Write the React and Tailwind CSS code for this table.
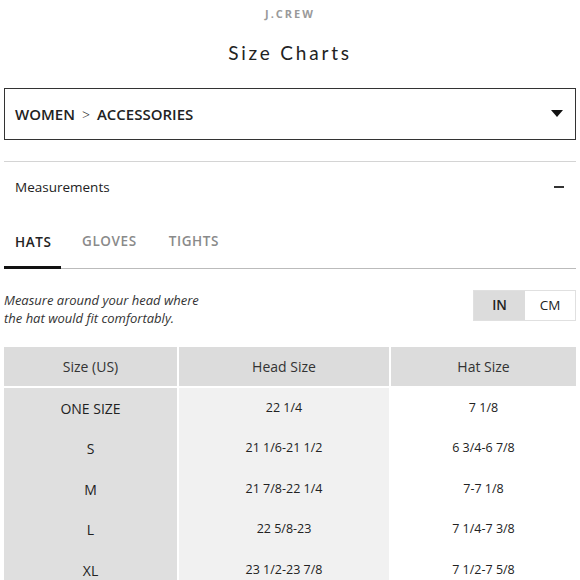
import React from "react";

const rows = [
  ["ONE SIZE", "22 1/4", "7 1/8"],
  ["S", "21 1/6-21 1/2", "6 3/4-6 7/8"],
  ["M", "21 7/8-22 1/4", "7-7 1/8"],
  ["L", "22 5/8-23", "7 1/4-7 3/8"],
  ["XL", "23 1/2-23 7/8", "7 1/2-7 5/8"],
];

export default function App() {
  return (
    <div className="w-[580px] h-[580px] overflow-hidden bg-white text-[#222] font-['Open_Sans',sans-serif]">
      <div className="flex flex-col items-center">
        <div className="mt-[7px] h-[12px] flex items-center text-[11px] font-bold tracking-[2px] text-[#9a9a9a] leading-none">
          J.CREW
        </div>
        <div className="mt-[23px] h-[20px] flex items-center font-['Lato',sans-serif] text-[19px] tracking-[2.8px] leading-none text-[#222]">
          Size Charts
        </div>
      </div>

      <div className="mx-[4px] mt-[26px] h-[52px] border-[1.5px] border-[#333] flex items-center justify-between pl-[10px] pr-[12px]">
        <div className="text-[15px] font-semibold text-[#222] flex items-center">
          <span>WOMEN</span>
          <span className="mx-[7px] font-light text-[14px]">&gt;</span>
          <span>ACCESSORIES</span>
        </div>
        <svg width="12" height="8" viewBox="0 0 12 8">
          <path d="M0 0 L12 0 L6 7 Z" fill="#111" />
        </svg>
      </div>

      <div className="mx-[4px] mt-[21px] border-t border-[#d4d4d4]" />

      <div className="mx-[4px] h-[50px] flex items-center justify-between pl-[11px] pr-[12px]">
        <div className="text-[13.5px] text-[#222]">Measurements</div>
        <div className="w-[10px] h-[2px] bg-[#333]" />
      </div>

      <div className="mx-[4px] mt-[6px] flex border-b border-[#bbb] h-[51px] items-stretch">
        <div className="w-[57px] flex flex-col">
          <div className="flex-1 flex items-center pl-[11px] text-[13.5px] font-semibold tracking-[0.6px] text-[#222]">
            HATS
          </div>
          <div className="h-[3px] bg-[#111] -mb-[1px]" />
        </div>
        <div className="flex items-center pl-[21px] text-[13.5px] font-semibold tracking-[0.6px] text-[#8a8a8a] pb-[3px]">
          GLOVES
        </div>
        <div className="flex items-center pl-[32px] text-[13.5px] font-semibold tracking-[0.6px] text-[#8a8a8a] pb-[3px]">
          TIGHTS
        </div>
      </div>

      <div className="mx-[4px] mt-[21px] flex justify-between items-start">
        <div className="italic text-[13px] leading-[18px] text-[#333] pt-[1px]">
          <div>Measure around your head where</div>
          <div>the hat would fit comfortably.</div>
        </div>
        <div className="flex h-[31px] border border-[#e0e0e0]">
          <div className="w-[51px] bg-[#dcdcdc] flex items-center justify-center text-[13.5px] font-semibold text-[#222]">
            IN
          </div>
          <div className="w-[50px] bg-white flex items-center justify-center text-[13.5px] text-[#222]">
            CM
          </div>
        </div>
      </div>

      <div className="mx-[4px] mt-[20px]">
        <div className="grid grid-cols-[173px_210px_1fr] gap-x-[2px] h-[39px] bg-white">
          <div className="bg-[#dcdcdc] flex items-center justify-center text-[14px] text-[#333]">Size (US)</div>
          <div className="bg-[#dcdcdc] flex items-center justify-center text-[14px] text-[#333]">Head Size</div>
          <div className="bg-[#dcdcdc] flex items-center justify-center text-[14px] text-[#333]">Hat Size</div>
        </div>
        <div className="grid grid-cols-[173px_210px_1fr] gap-x-[2px] mt-[2px]">
          <div className="bg-[#dfdfdf] flex flex-col">
            {rows.map((r) => (
              <div key={r[0]} className="h-[40.5px] flex items-center justify-center text-[14px] text-[#222]">
                {r[0]}
              </div>
            ))}
          </div>
          <div className="bg-[#f1f1f1] flex flex-col">
            {rows.map((r) => (
              <div key={r[0]} className="h-[40.5px] flex items-center justify-center text-[12.5px] text-[#222]">
                {r[1]}
              </div>
            ))}
          </div>
          <div className="bg-white flex flex-col">
            {rows.map((r) => (
              <div key={r[0]} className="h-[40.5px] flex items-center justify-center text-[12.5px] text-[#222]">
                {r[2]}
              </div>
            ))}
          </div>
        </div>
      </div>
    </div>
  );
}
